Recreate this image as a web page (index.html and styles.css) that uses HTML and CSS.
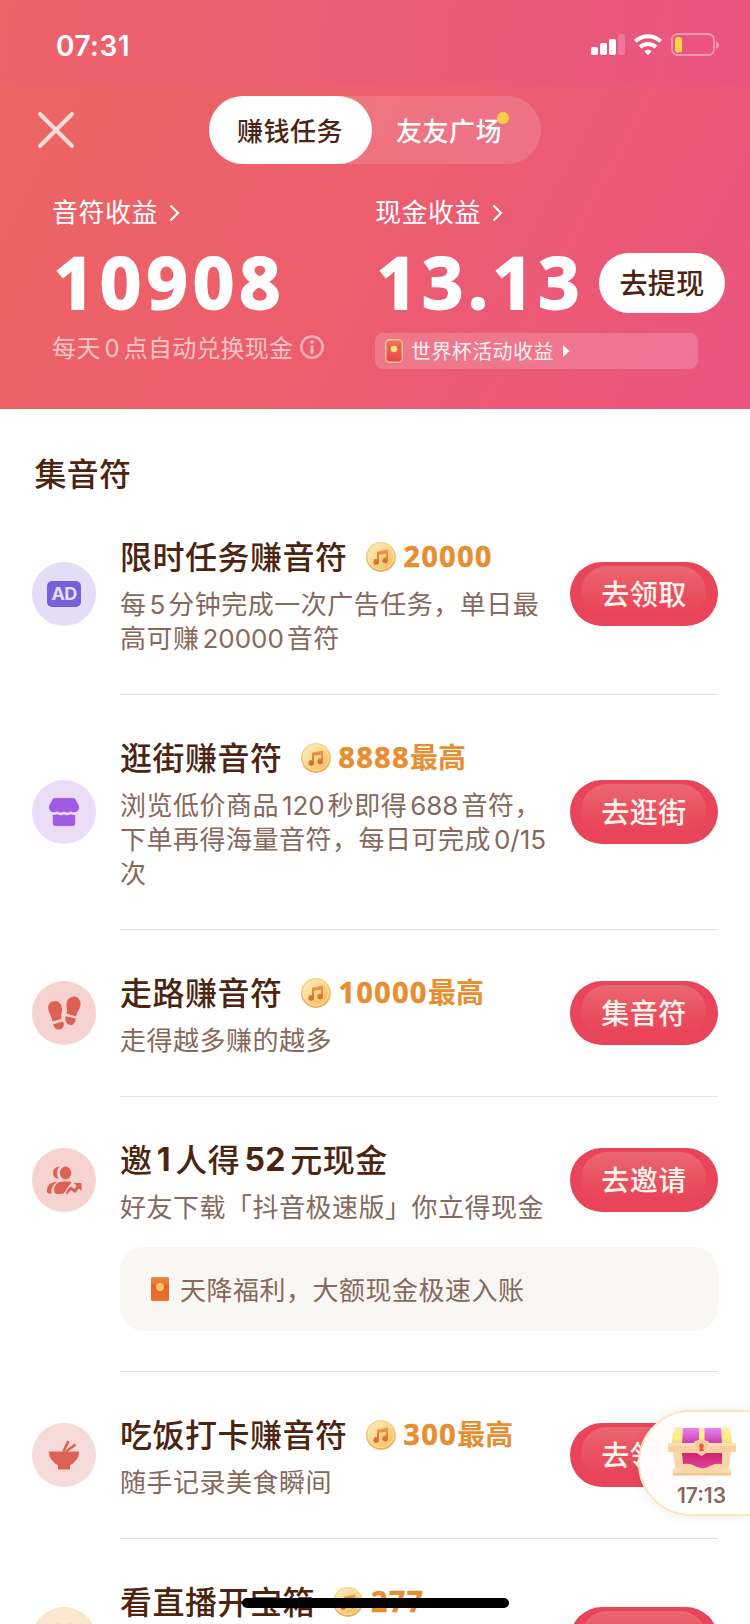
FILE: index.html
```html
<!DOCTYPE html>
<html lang="zh-CN">
<head>
<meta charset="utf-8">
<title>赚钱任务</title>
<link rel="stylesheet" href="styles.css">
</head>
<body>
<svg class="defs" width="0" height="0" aria-hidden="true">
  <defs>
    <linearGradient id="coinFill" x1="0" y1="0" x2="1" y2="1"><stop offset="0" stop-color="#fdf0c8"/><stop offset=".5" stop-color="#f8d68a"/><stop offset="1" stop-color="#f3b75a"/></linearGradient>
    <linearGradient id="coinEdge" x1="0" y1="0" x2="0" y2="1"><stop offset="0" stop-color="#f7d888"/><stop offset="1" stop-color="#eeae50"/></linearGradient>
    <linearGradient id="noteFill" x1="0" y1="0" x2="0" y2="1"><stop offset="0" stop-color="#ee9a48"/><stop offset="1" stop-color="#cf6a2c"/></linearGradient>
    <linearGradient id="envRed" x1="0" y1="0" x2="0" y2="1"><stop offset="0" stop-color="#e87c5c"/><stop offset="1" stop-color="#ee3f50"/></linearGradient>
    <linearGradient id="envOrange" x1="0" y1="0" x2="0" y2="1"><stop offset="0" stop-color="#ed8b4a"/><stop offset=".45" stop-color="#e8662a"/><stop offset="1" stop-color="#ee7030"/></linearGradient>
    <linearGradient id="lid" x1="0" y1="0" x2="0" y2="1"><stop offset="0" stop-color="#e583f4"/><stop offset="1" stop-color="#c93aa6"/></linearGradient>
    <linearGradient id="box" x1="0" y1="0" x2="0" y2="1"><stop offset="0" stop-color="#cc2668"/><stop offset="1" stop-color="#e0409c"/></linearGradient>
    <linearGradient id="gold" x1="0" y1="0" x2="0" y2="1"><stop offset="0" stop-color="#fbeab8"/><stop offset=".65" stop-color="#fbf07e"/><stop offset="1" stop-color="#f6cf94"/></linearGradient>
    <symbol id="coin" viewBox="0 0 30 30">
      <circle cx="15" cy="15" r="15" fill="url(#coinEdge)"/>
      <circle cx="14.7" cy="14.7" r="12.9" fill="url(#coinFill)" stroke="#fbe5ae" stroke-width="1"/>
      <path d="M11 9.7 22 7.6V18.4A2.8 2.8 0 1 1 20.2 15.8V11.4L13 12.7V20A2.8 2.8 0 1 1 11 17.3Z" fill="url(#noteFill)"/>
    </symbol>
  </defs>
</svg>
<div class="screen">
  <header class="header">
    <div class="status">
      <span class="time">07:31</span>
      <svg class="status-icons" width="130" height="24" viewBox="0 0 130 24">
        <g fill="#fff"><rect x="1" y="14" width="7" height="8" rx="1.8"/><rect x="10" y="10" width="7" height="12" rx="1.8"/><rect x="19" y="6" width="7" height="16" rx="1.8"/><rect x="28" y="1" width="7" height="21" rx="1.8" opacity=".2"/></g>
        <g fill="none" stroke="#fff" stroke-width="4"><path d="M45.3 8.2A18.5 18.5 0 0 1 70.700 8.200"/><path d="M50 14.100A12 12 0 0 1 66 14.100"/></g>
        <path d="M54.300 18.200A6 6 0 0 1 61.700 18.200L58 21.900Z" fill="#fff"/>
        <rect x="82" y="1" width="42" height="21" rx="5.500" fill="none" stroke="#fff" stroke-opacity=".4" stroke-width="1.800"/>
        <path d="M126 8.500Q129 9.500 129 12T126 15.500Z" fill="#fff" opacity=".45"/>
        <rect x="85" y="4" width="7" height="15.500" rx="2.500" fill="#f8d648"/>
      </svg>
    </div>
    <nav class="nav">
      <svg class="close" width="36" height="36" viewBox="0 0 36 36"><path d="M2 2 34 34M34 2 2 34" stroke="#fbdcdd" stroke-width="4" stroke-linecap="round"/></svg>
      <div class="tabs">
        <span class="tab active">赚钱任务</span>
        <span class="tab"><span class="tab-label">友友广场<i class="dot"></i></span></span>
      </div>
    </nav>
    <section class="balances">
      <div class="balance">
        <div class="label">音符收益<svg class="chev" width="11" height="18" viewBox="0 0 11 18"><path d="M1.500 1.500 9 9 1.500 16.500" fill="none" stroke="#fff" stroke-width="2.200"/></svg></div>
        <div class="amount-row"><span class="amount">10908</span></div>
        <div class="note"><span class="note-text">每天<span class="n n-wide">0</span>点自动兑换现金</span><svg class="info" width="24" height="24" viewBox="0 0 24 24"><circle cx="12" cy="12" r="10.700" fill="none" stroke="currentColor" stroke-width="2.500"/><circle cx="12" cy="6.700" r="2" fill="currentColor"/><path d="M12 11.500V17.500" stroke="currentColor" stroke-width="3.200" stroke-linecap="round"/></svg></div>
      </div>
      <div class="balance">
        <div class="label">现金收益<svg class="chev" width="11" height="18" viewBox="0 0 11 18"><path d="M1.500 1.500 9 9 1.500 16.500" fill="none" stroke="#fff" stroke-width="2.200"/></svg></div>
        <div class="amount-row"><span class="amount cash">13.13</span><span class="withdraw">去提现</span></div>
        <div class="chip"><svg width="18" height="24" viewBox="0 0 18 24"><rect x=".7" y=".7" width="16.600" height="22.600" rx="4" fill="url(#envRed)" stroke="#f2c98c" stroke-width="1.400"/><path d="M2 7 9 12 16 7" fill="none" stroke="#cf503f"/><circle cx="9" cy="10" r="3.300" fill="#fbe07c"/></svg><span class="chip-text">世界杯活动收益</span><svg width="7" height="12" viewBox="0 0 7 12"><path d="M0 0 6.500 6 0 12Z" fill="#fff"/></svg></div>
      </div>
    </section>
  </header>

  <main class="tasks">
    <h2 class="heading">集音符</h2>

    <article class="task">
      <div class="icon ad"><span class="ad-badge">AD</span></div>
      <div class="body">
        <div class="row">
          <div class="copy">
            <h3 class="title">限时任务赚音符<svg class="coin" width="30" height="30"><use href="#coin"/></svg><span class="reward">20000</span></h3>
            <p class="desc">每<span class="n">5</span>分钟完成一次广告任务，单日最<br>高可赚<span class="n">20000</span>音符</p>
          </div>
          <span class="button">去领取</span>
        </div>
      </div>
    </article>

    <article class="task">
      <div class="icon shop"><svg width="32" height="30" viewBox="0 0 32 30" fill="#a15ae6"><path d="M7 1H25Q26.500 1 27.300 2.200L30.500 8Q31.500 10 30.800 12A4.500 4.500 0 0 1 27 15.300Q24 15.300 23 14.300Q21.500 15.500 19.300 15.500T16 14.300Q14.900 15.500 12.700 15.500T9 14.300Q8 15.300 5 15.300A4.500 4.500 0 0 1 1.200 12Q.5 10 1.500 8L4.700 2.200Q5.500 1 7 1Z"/><path d="M4.800 18Q7.500 18 9.200 17.300Q12.500 19 16 17.300Q19.500 19 22.800 17.300Q24.500 18 27.200 18V26Q27.200 29 24.500 29H7.500Q4.800 29 4.800 26Z"/></svg></div>
      <div class="body">
        <div class="row">
          <div class="copy">
            <h3 class="title">逛街赚音符<svg class="coin" width="30" height="30"><use href="#coin"/></svg><span class="reward">8888</span><b class="max">最高</b></h3>
            <p class="desc">浏览低价商品<span class="n">120</span>秒即得<span class="n">688</span>音符，<br>下单再得海量音符，每日可完成<span class="n">0/15</span><br>次</p>
          </div>
          <span class="button">去逛街</span>
        </div>
      </div>
    </article>

    <article class="task">
      <div class="icon walk"><svg width="34" height="34" viewBox="0 0 34 34" fill="#dd6054"><path d="M5.500 25.400Q5.600 23.800 3.600 19.800Q.5 13.500 1.200 10.500Q2.400 5.500 7.300 5.100Q12.600 4.800 14.600 10.500Q15.600 13.500 14.500 17.500Q13.900 20 14.700 22.700Z"/><path d="M6.200 28.200 16.200 25.500Q18 30.200 14.800 32.600Q11.500 34.500 8.700 32.400Q6.800 31 6.200 28.200Z"/><path d="M19.300 17.500Q20.500 16 19.800 12Q18.800 6.500 21 3.500Q23.500.5 27.500.5Q31.500 1 33.200 5.300Q34.400 9 32 13.500Q29.200 18 29.200 20.500Z"/><path d="M18.600 20.300 28.800 22.600Q28.300 27.500 25.400 28.800Q22 29.700 19.600 27Q18 25 18.600 20.300Z"/></svg></div>
      <div class="body">
        <div class="row">
          <div class="copy">
            <h3 class="title">走路赚音符<svg class="coin" width="30" height="30"><use href="#coin"/></svg><span class="reward">10000</span><b class="max">最高</b></h3>
            <p class="desc">走得越多赚的越多</p>
          </div>
          <span class="button">集音符</span>
        </div>
      </div>
    </article>

    <article class="task">
      <div class="icon invite"><svg width="36" height="30" viewBox="0 0 36 30"><g fill="#dd6054"><path d="M13 1.800A5.500 6 0 0 0 7 8Q7 13 12.500 14Q9.500 8 13 1.800Z"/><ellipse cx="19.600" cy="8" rx="5.700" ry="6.500"/><path d="M11 17Q1 17 .8 26Q1 28 2.500 28.500L5.500 28.700Q4 21.500 11 17Z"/><path d="M8 26Q8 16.500 17 16.500H21.500Q25.500 16.500 25.500 17.800Q22.500 20.500 19 26.500Q18 29 15.500 29H10.500Q8 28.500 8 26Z"/><path d="M27.500 17.800 35.500 18 35.600 26 33 23.500 29 28 25 25 21.500 28.800 19.500 28.800Q21.500 23.500 25 21.500L28.500 24 30.500 21Z"/></g></svg></div>
      <div class="body">
        <div class="row">
          <div class="copy">
            <h3 class="title">邀<span class="n">1</span>人得<span class="n">52</span>元现金</h3>
            <p class="desc">好友下载「抖音极速版」你立得现金</p>
          </div>
          <span class="button">去邀请</span>
        </div>
        <div class="tip"><svg width="18" height="24" viewBox="0 0 18 24"><rect width="18" height="24" rx="1.500" fill="url(#envOrange)"/><path d="M0 7 9 13.500 18 7" fill="none" stroke="#c9531f" stroke-opacity=".6"/><circle cx="9" cy="10" r="4" fill="#f6c566"/></svg><span class="tip-text">天降福利，大额现金极速入账</span></div>
      </div>
    </article>

    <article class="task">
      <div class="icon eat"><svg width="32" height="30" viewBox="0 0 32 30" fill="#dd6054"><path d="M.8 11.500H31.200Q31 20.500 22 25.300V29.500H10V25.300Q1 20.500.8 11.500Z"/><path d="M15.300 11.500 20.500 1.200M18 11.500 27.500 4.500" fill="none" stroke="#dd6054" stroke-width="2.600"/></svg></div>
      <div class="body">
        <div class="row">
          <div class="copy">
            <h3 class="title">吃饭打卡赚音符<svg class="coin" width="30" height="30"><use href="#coin"/></svg><span class="reward">300</span><b class="max">最高</b></h3>
            <p class="desc">随手记录美食瞬间</p>
          </div>
          <span class="button">去领取</span>
        </div>
      </div>
    </article>

    <article class="task">
      <div class="icon live"><svg width="32" height="32" viewBox="0 0 32 32"><path d="M9 1 14 7M23 1 18 7" stroke="#ee9c42" stroke-width="2.500"/><rect x="2" y="7" width="28" height="22" rx="4" fill="#ee9c42"/></svg></div>
      <div class="body">
        <div class="row tall">
          <div class="copy">
            <h3 class="title">看直播开宝箱<svg class="coin" width="30" height="30"><use href="#coin"/></svg><span class="reward">277</span></h3>
          </div>
          <span class="button"></span>
        </div>
      </div>
    </article>
  </main>

  <aside class="treasure">
    <svg width="68" height="50" viewBox="0 0 68 50">
      <path d="M8 1H60L64 17H4Z" fill="url(#lid)"/>
      <path d="M7 1Q10-.5 15 .5L14 17H4Q4 6 7 1ZM53 .5Q58-.5 61 1Q64 6 64 17H54ZM31 .5H36.500V17H31Z" fill="url(#gold)"/>
      <path d="M5 24H63L60 48H8Z" fill="#f9d6a8"/>
      <path d="M14 26H54V37Q47 36 42 39Q34 44 25 38Q21 36 15 37Z" fill="url(#box)"/>
      <rect y="16" width="68" height="9" rx="1" fill="#f8cfa0"/><rect y="16" width="68" height="3" fill="#fbe2b4"/>
      <path d="M5 41.500H13L18 48H5ZM63 41.500H55L51 48H63Z" fill="#fbdfb2"/><rect x="5" y="46" width="58" height="2.500" fill="#f4c48c"/>
      <path d="M26.500 15 33.500 12.500 40.500 15V24L33.500 28.500 26.500 24Z" fill="#f7caa0" stroke="#f5dfae"/><circle cx="33.500" cy="18.700" r="2.300" fill="#df603d"/><path d="M32.500 19H34.500L36 24H31Z" fill="#df603d"/>
    </svg>
    <span class="countdown">17:13</span>
  </aside>
  <div class="home-indicator"></div>
</div>
</body>
</html>
```

FILE: styles.css
```css
* { box-sizing: border-box; }

body {
  margin: 0;
  background: #fff;
  color: #4c2410;
  font-family: Inter, "Noto Sans CJK SC", sans-serif;
}

.defs { position: absolute; }

.screen {
  position: relative;
  width: 750px;
  height: 1624px;
  overflow: hidden;
}

.header {
  height: 409px;
  color: #fff;
  background: linear-gradient(118deg, #ed6662 0%, #ec5e6d 48%, #ea547f 100%);
}

.status {
  height: 86px;
  padding: 0 30px 0 56px;
  display: flex;
  align-items: center;
  justify-content: space-between;
  background: linear-gradient(97deg, #ed6368 0%, #ea5c75 48%, #ea547e 100%);
}
.time { font-size: 28px; font-weight: 600; line-height: 40px; padding-top: 5px; letter-spacing: 0.5px; }
.status-icons { margin-top: 4px; }

.nav {
  height: 78px;
  padding: 10px 38px 0;
  display: grid;
  grid-template-columns: 171px 332px;
  align-items: center;
}
.tabs {
  display: grid;
  grid-template-columns: 163px 1fr;
  height: 68px;
  border-radius: 34px;
  background: rgba(255, 255, 255, 0.14);
}
.tab {
  display: flex;
  justify-content: center;
  align-items: center;
  padding: 0 1px 1px 0;
  font-size: 26px;
  font-weight: 500;
  letter-spacing: 0.5px;
  border-radius: 34px;
}
.tab:last-child { justify-content: flex-start; padding-left: 24px; }
.tab-label { position: relative; }
.tab.active { background: #fff; color: #4c2410; }
.dot {
  position: absolute;
  right: -7px;
  top: 1px;
  width: 12px;
  height: 12px;
  border-radius: 50%;
  background: #f6ce4a;
}

.balances {
  padding: 29px 0 0 52px;
  display: grid;
  grid-template-columns: 323px 1fr;
}
.label {
  height: 40px;
  line-height: 40px;
  font-size: 26px;
  letter-spacing: 0.5px;
  display: flex;
  align-items: center;
}
.chev { margin-left: 11px; }
.amount-row { height: 100px; display: flex; align-items: center; }
.amount {
  margin: -4px 0 0 1.5px;
  font-family: "Open Sans", "Noto Sans", sans-serif;
  font-size: 72px;
  font-weight: 700;
  -webkit-text-stroke: 1.8px #fff;
  letter-spacing: 5.3px;
  line-height: 100px;
}
.amount.cash { width: 222.5px; letter-spacing: 4.4px; }
.withdraw {
  width: 126px;
  height: 60px;
  padding-bottom: 2px;
  border-radius: 30px;
  background: #fff;
  color: #4c2410;
  font-size: 28px;
  font-weight: 500;
  letter-spacing: 0.4px;
  display: flex;
  align-items: center;
  justify-content: center;
}
.note {
  height: 28px;
  display: flex;
  align-items: center;
  font-size: 24px;
  letter-spacing: 0.2px;
  color: rgba(255, 255, 255, 0.65);
}
.note-text { padding-bottom: 2px; }
.n { margin: 0 3px; }
.desc .n { letter-spacing: -0.05px; }
.note .n-wide { margin: 0 4px; }
.info { margin-left: 7px; color: rgba(255, 255, 255, 0.5); }
.chip {
  width: 323px;
  height: 36px;
  padding-left: 10px;
  border-radius: 8px;
  background: rgba(255, 255, 255, 0.18);
  display: flex;
  align-items: center;
}
.chip-text {
  margin: 0 9px 0 8px;
  padding-bottom: 2px;
  font-size: 20px;
  letter-spacing: 0.4px;
  color: rgba(255, 255, 255, 0.9);
}

.tasks { padding: 50px 32px 0; }
.heading {
  height: 35px;
  margin: 0 0 0 2.5px;
  font-size: 32px;
  line-height: 32px;
  font-weight: 500;
  letter-spacing: 0.3px;
}

.task { display: grid; grid-template-columns: 88px 1fr; }
.body { grid-column: 2; border-bottom: 1px solid #e5e1e1; }
.icon {
  grid-column: 1;
  width: 64px;
  height: 64px;
  margin-bottom: 1px;
  border-radius: 50%;
  display: flex;
  align-items: center;
  justify-content: center;
  align-self: center;
}
.task:has(.tip) .icon { align-self: start; margin-top: 51px; }
.ad { background: #e3def6; }
.shop { background: #ebdcf8; }
.walk, .invite { background: #f6d3d1; }
.eat { background: #f6dcd9; }
.live { background: #fae6cc; }
.ad-badge {
  width: 34px;
  height: 26px;
  border-radius: 5px;
  background: #7860dc;
  color: #e3def6;
  font-size: 18px;
  line-height: 26px;
  font-weight: 700;
  letter-spacing: -0.6px;
  text-align: center;
}

.row {
  padding: 39px 0 38px;
  display: grid;
  grid-template-columns: 450px 148px;
  align-items: center;
}
.row.tall { height: 200px; align-items: start; }
.row.tall .button { margin-top: 29px; }
.title {
  height: 46px;
  margin: 0;
  padding-bottom: 2px;
  display: flex;
  align-items: center;
  font-size: 32px;
  font-weight: 500;
  letter-spacing: 0.5px;
  white-space: nowrap;
}
.title .n { margin: 2px 4.2px 0; font-weight: 700; }
.coin { margin: 3px 0 0 18px; flex: none; }
.reward {
  margin: 2px 0 0 8px;
  color: #e68e30;
  font-family: "Open Sans", "Noto Sans", sans-serif;
  font-size: 28.5px;
  line-height: 38px;
  font-weight: 700;
  -webkit-text-stroke: 0.6px #e68e30;
  letter-spacing: 1.6px;
}
.max {
  color: #e68e30;
  font-size: 28px;
  font-weight: 700;
  letter-spacing: 0;
}
.desc {
  margin: 9px 0 0;
  font-size: 26px;
  line-height: 34px;
  letter-spacing: 0.5px;
  color: #87685b;
  white-space: nowrap;
}
.button {
  position: relative;
  isolation: isolate;
  width: 148px;
  height: 64px;
  margin-bottom: 1px;
  padding-bottom: 2px;
  border-radius: 32px;
  background: #e9455a;
  color: #fff3ee;
  font-size: 28px;
  font-weight: 500;
  letter-spacing: 0.5px;
  display: flex;
  align-items: center;
  justify-content: center;
}
/* glossy highlight behind the label */
.button::before {
  content: "";
  position: absolute;
  z-index: -1;
  inset: 4px 12px 8px 11px;
  border-radius: 27px;
  background: linear-gradient(180deg, #ea6870 0%, #e9525f 50%, #e9455a 90%);
}

.tip {
  height: 84px;
  margin: -16px 0 40px;
  padding-left: 31px;
  border-radius: 24px;
  background: #f9f7f4;
  display: flex;
  align-items: center;
  gap: 11px;
  font-size: 26px;
  letter-spacing: 0.5px;
  color: #87685b;
}
.tip-text { padding-bottom: 2px; }

.treasure {
  position: absolute;
  left: 638px;
  top: 1410px;
  width: 114px;
  height: 106px;
  padding: 15px 0 0 13px;
  border: 2px solid #fbe6c4;
  border-radius: 53px 0 0 53px;
  background: rgba(255, 255, 255, 0.975);
  box-shadow: 0 0 12px rgba(0, 0, 0, 0.08);
  display: flex;
  flex-direction: column;
  align-items: center;
}
.countdown { margin-top: 7px; font-size: 21px; line-height: 24px; font-weight: 600; color: #87685b; }

.home-indicator {
  position: absolute;
  left: 242px;
  top: 1598px;
  width: 267px;
  height: 10px;
  border-radius: 5px;
  background: #000;
}
```
